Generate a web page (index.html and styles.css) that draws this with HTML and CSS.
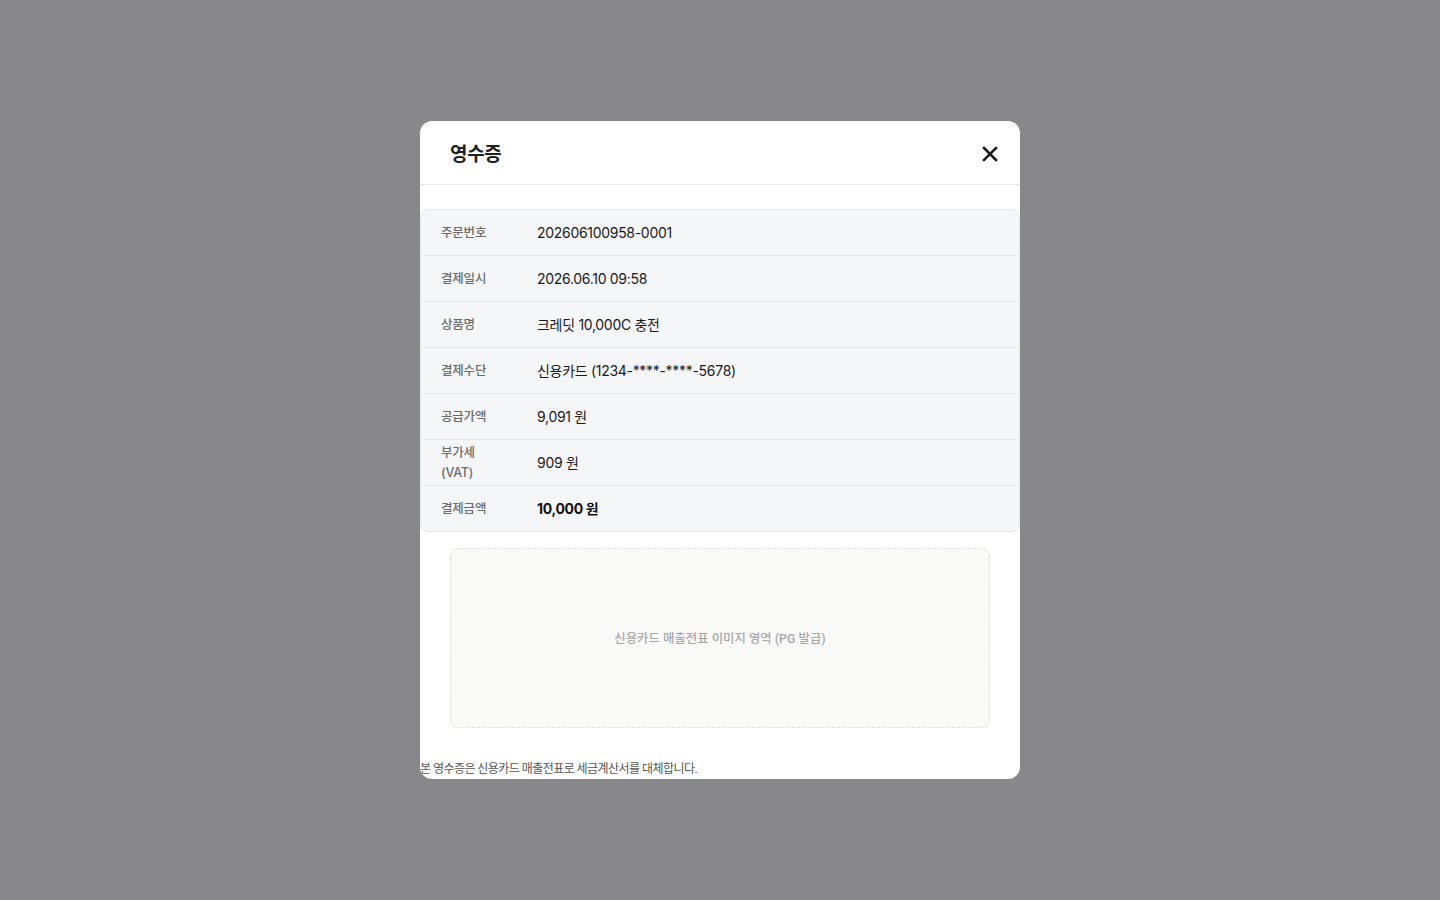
FILE: index.html
```html
<!DOCTYPE html>
<html lang="ko">
<head>
<meta charset="utf-8">
<title>영수증</title>
<link rel="stylesheet" href="styles.css">
</head>
<body>
<div class="overlay">
  <div class="modal" role="dialog" aria-label="영수증">
    <header class="modal-header">
      <h2 class="modal-title">영수증</h2>
      <button class="close-btn" type="button" aria-label="닫기">
        <svg width="18" height="18" viewBox="0 0 18 18" fill="none" stroke="#1a1a1a" stroke-width="2.6" stroke-linecap="square">
          <path d="M3 3 L15 15 M15 3 L3 15"/>
        </svg>
      </button>
    </header>
    <div class="modal-body">
      <table class="receipt">
        <tbody>
          <tr><th>주문번호</th><td>202606100958-0001</td></tr>
          <tr><th>결제일시</th><td>2026.06.10 09:58</td></tr>
          <tr><th>상품명</th><td>크레딧 10,000C 충전</td></tr>
          <tr><th>결제수단</th><td>신용카드 (1234-****-****-5678)</td></tr>
          <tr><th>공급가액</th><td>9,091 원</td></tr>
          <tr><th>부가세 (VAT)</th><td>909 원</td></tr>
          <tr class="total"><th>결제금액</th><td>10,000 원</td></tr>
        </tbody>
      </table>
      <div class="slip-placeholder">신용카드 매출전표 이미지 영역 (PG 발급)</div>
    </div>
    <p class="notice">본 영수증은 신용카드 매출전표로 세금계산서를 대체합니다.</p>
  </div>
</div>
</body>
</html>
```

FILE: styles.css
```css
* { box-sizing: border-box; }

html, body {
  margin: 0;
  height: 100%;
}

body {
  font-family: Inter, "Noto Sans CJK KR", sans-serif;
  background: #ffffff;
}

.overlay {
  position: fixed;
  inset: 0;
  background: #88888a;
  display: flex;
  align-items: center;
  justify-content: center;
}

.modal {
  width: 600px;
  background: #ffffff;
  border-radius: 12px;
  overflow: hidden;
  display: flex;
  flex-direction: column;
}

.modal-header {
  height: 64px;
  display: flex;
  align-items: center;
  justify-content: space-between;
  padding: 0 20px 0 30px;
  border-bottom: 1px solid #e6e6e6;
}

.modal-title {
  margin: 0;
  font-size: 19px;
  font-weight: 700;
  color: #222222;
  letter-spacing: -0.3px;
}

.close-btn {
  width: 20px;
  height: 20px;
  margin-top: 2px;
  padding: 0;
  border: 0;
  background: transparent;
  display: flex;
  align-items: center;
  justify-content: center;
  cursor: pointer;
}

.modal-body {
  padding-top: 24px;
}

.receipt {
  width: 100%;
  border-collapse: separate;
  border-spacing: 0;
  background: #f5f6f8;
  border: 1px solid #e6e7ea;
  border-radius: 8px;
}

.receipt th,
.receipt td {
  height: 46px;
  padding: 1px 20px 0;
  line-height: 20px;
  text-align: left;
  vertical-align: middle;
  border-bottom: 1px solid #e6e7ea;
}

.receipt tr:last-child th,
.receipt tr:last-child td {
  border-bottom: 0;
  height: 45px;
}

.receipt th {
  width: 96px;
  font-size: 12.5px;
  font-weight: 500;
  color: #6b6b6b;
  letter-spacing: -0.2px;
}

.receipt td {
  padding-left: 20px;
  font-size: 14px;
  font-weight: 400;
  color: #1a1a1a;
  letter-spacing: -0.3px;
}

.receipt .total td {
  font-weight: 700;
  color: #111111;
}

.slip-placeholder {
  margin: 16px 30px 0;
  height: 180px;
  display: flex;
  align-items: center;
  justify-content: center;
  background: #f9f9f8;
  border: 1px dashed #e0e0e0;
  border-radius: 8px;
  font-family: Roboto, "Noto Sans CJK KR", sans-serif;
  font-size: 12.4px;
  font-weight: 500;
  color: #a8a8a8;
}

.notice {
  margin: 31px 0 0;
  padding-bottom: 0;
  font-family: Roboto, "Noto Sans CJK KR", sans-serif;
  font-size: 12px;
  line-height: 20px;
  color: #555555;
  letter-spacing: -0.55px;
}
```
